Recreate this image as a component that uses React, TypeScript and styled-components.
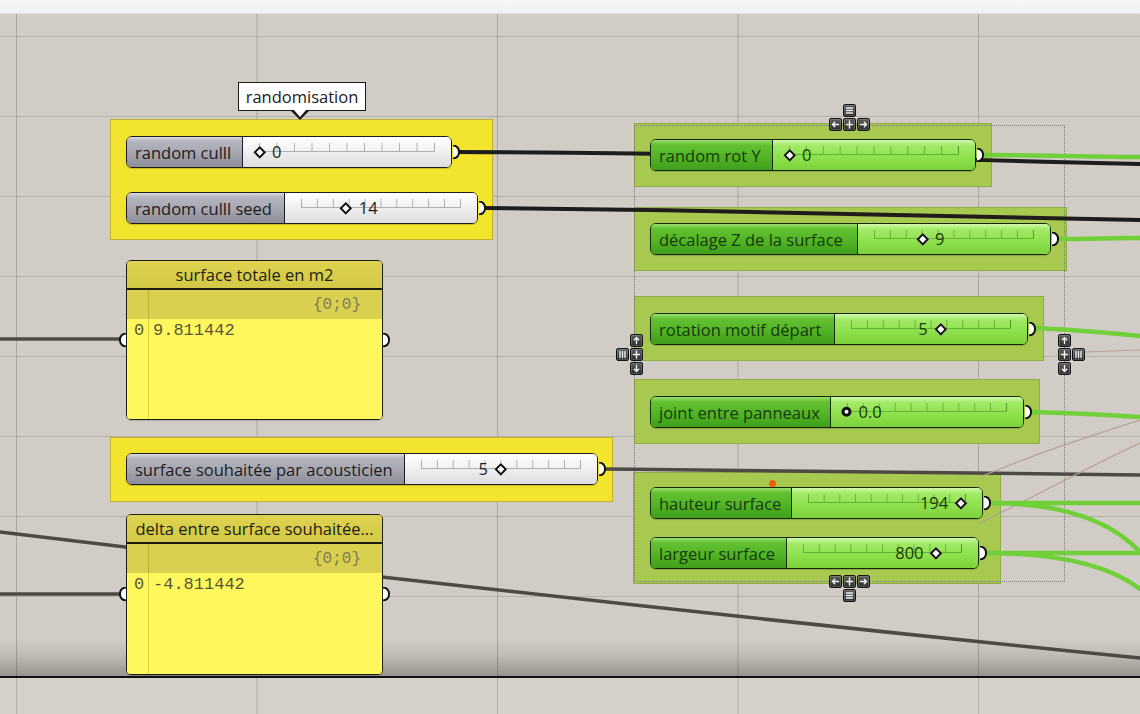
import styled, { createGlobalStyle, css } from "styled-components";

// canvas starts under the 14px light strip at the top of the window
const OY = 14;

type Tone = "gray" | "green";
type KnobKind = "diamond" | "dot";

type SliderSpec = {
  label: string;
  x: number;
  y: number;
  w: number;
  labelW: number;
  value: string;
  pct: number;
  tone: Tone;
  knob?: KnobKind;
};

type GroupSpec = { x: number; y: number; w: number; h: number; tone: "yellow" | "green" };

type PanelSpec = { title: string; x: number; y: number; h: number; value: string };

type Glyph = "menu" | "cols" | "left" | "right" | "up" | "down" | "move";

type PadSpec = { x: number; y: number; dir: "row" | "column"; reverse?: boolean; main: Glyph[]; side: Glyph };

const sliders: SliderSpec[] = [
  { label: "random culll", x: 126, y: 136, w: 326, labelW: 117, value: "0", pct: 0, tone: "gray" },
  { label: "random culll seed", x: 126, y: 192, w: 352, labelW: 159, value: "14", pct: 0.28, tone: "gray" },
  { label: "surface souhaitée par acousticien", x: 126, y: 453, w: 472, labelW: 279, value: "5", pct: 0.5, tone: "gray" },
  { label: "random rot Y", x: 650, y: 139, w: 326, labelW: 123, value: "0", pct: 0, tone: "green" },
  { label: "décalage Z de la surface", x: 650, y: 223, w: 401, labelW: 208, value: "9", pct: 0.3, tone: "green" },
  { label: "rotation motif départ", x: 650, y: 313, w: 378, labelW: 185, value: "5", pct: 0.56, tone: "green" },
  { label: "joint entre panneaux", x: 650, y: 396, w: 374, labelW: 181, value: "0.0", pct: 0, tone: "green", knob: "dot" },
  { label: "hauteur surface", x: 650, y: 487, w: 333, labelW: 142, value: "194", pct: 0.97, tone: "green" },
  { label: "largeur surface", x: 650, y: 537, w: 329, labelW: 137, value: "800", pct: 0.84, tone: "green" },
];

const groups: GroupSpec[] = [
  { x: 110, y: 119, w: 383, h: 121, tone: "yellow" },
  { x: 110, y: 437, w: 503, h: 65, tone: "yellow" },
  { x: 634, y: 123, w: 358, h: 64, tone: "green" },
  { x: 634, y: 207, w: 433, h: 64, tone: "green" },
  { x: 634, y: 296, w: 410, h: 65, tone: "green" },
  { x: 634, y: 379, w: 406, h: 65, tone: "green" },
  { x: 633, y: 472, w: 368, h: 112, tone: "green" },
];

const panels: PanelSpec[] = [
  { title: "surface totale en m2", x: 126, y: 260, h: 160, value: "9.811442" },
  { title: "delta entre surface souhaitée...", x: 126, y: 514, h: 161, value: "-4.811442" },
];

const pads: PadSpec[] = [
  { x: 829, y: 104, dir: "column", main: ["left", "move", "right"], side: "menu" },
  { x: 829, y: 575, dir: "column", reverse: true, main: ["left", "move", "right"], side: "menu" },
  { x: 616, y: 334, dir: "row", main: ["up", "move", "down"], side: "cols" },
  { x: 1058, y: 334, dir: "row", reverse: true, main: ["up", "move", "down"], side: "cols" },
];

const DARK = "#1e1d1b";
const GRAY = "#4d4a46";
const GREEN = "#71d03a";
const FAINT = "#b79f98";

const wires = [
  { d: "M0,339 L122,339", c: GRAY, w: 3.5 },
  { d: "M0,594 L122,594", c: GRAY, w: 3.5 },
  { d: "M0,532 C380,578 760,620 1140,658", c: GRAY, w: 3.5 },
  { d: "M603,469 C800,470 1000,472 1140,475", c: GRAY, w: 3.5 },
  { d: "M980,477 C1040,452 1090,436 1140,420", c: FAINT, w: 1.2 },
  { d: "M980,523 C1040,494 1090,466 1140,443", c: FAINT, w: 1.2 },
  { d: "M1085,352 L1140,350", c: FAINT, w: 1 },
  { d: "M458,152 C700,153 900,158 1140,164", c: DARK, w: 4 },
  { d: "M484,208 C700,210 900,214 1140,220", c: DARK, w: 4 },
  { d: "M982,155 C1050,155 1100,157 1140,157", c: GREEN, w: 4.5 },
  { d: "M1057,239 C1090,239 1110,238 1140,238", c: GREEN, w: 4.5 },
  { d: "M1034,328 C1080,330 1110,333 1140,336", c: GREEN, w: 4.5 },
  { d: "M1030,412 C1080,413 1110,415 1140,417", c: GREEN, w: 4.5 },
  { d: "M989,503 L1140,503", c: GREEN, w: 4.5 },
  { d: "M989,503 C1060,503 1110,520 1140,552", c: GREEN, w: 4.5 },
  { d: "M985,553 L1140,553", c: GREEN, w: 4.5 },
  { d: "M985,553 C1060,553 1110,566 1140,589", c: GREEN, w: 4.5 },
];

const glyphPaths: Record<Glyph, string> = {
  menu: "M3.5 4h6M3.5 6.5h6M3.5 9h6",
  cols: "M4 3.5v6M6.5 3.5v6M9 3.5v6",
  left: "M9.5 6.5H3.5M5.7 4.3L3.5 6.5l2.2 2.2",
  right: "M3.5 6.5h6M7.3 4.3l2.2 2.2-2.2 2.2",
  up: "M6.5 9.5V3.5M4.3 5.7l2.2-2.2 2.2 2.2",
  down: "M6.5 3.5v6M4.3 7.3l2.2 2.2 2.2-2.2",
  move: "M6.5 3v7M3.5 6.5h6",
};

export default function App() {
  return (
    <>
      <GlobalStyle />
      <Page>
        <TopStrip />
        <Canvas>
          {groups.map((g, i) => (
            <GroupBox key={i} $x={g.x} $y={g.y} $w={g.w} $h={g.h} $tone={g.tone} />
          ))}
          <Selection $x={634} $y={125} $w={431} $h={457} />
          <Wires viewBox={`0 ${OY} 1140 662`}>
            {wires.map((w, i) => (
              <path key={i} d={w.d} stroke={w.c} strokeWidth={w.w} fill="none" strokeLinecap="round" />
            ))}
          </Wires>
          {sliders.map((s) => (
            <Slider key={s.label} s={s} />
          ))}
          {panels.map((p) => (
            <PanelBox key={p.title} $x={p.x} $y={p.y} $h={p.h}>
              <PanelHead>{p.title}</PanelHead>
              <PanelPath>{"{0;0}"}</PanelPath>
              <PanelBody>
                <PanelIndex>0</PanelIndex>
                <PanelValue>{p.value}</PanelValue>
              </PanelBody>
              <PanelGrip $side="left" />
              <PanelGrip $side="right" />
            </PanelBox>
          ))}
          <Tip $x={238} $y={82}>randomisation</Tip>
          {pads.map((p, i) => (
            <Pad key={i} $x={p.x} $y={p.y} $dir={p.dir} $reverse={!!p.reverse}>
              <PadSide>
                <GumButton g={p.side} />
              </PadSide>
              <PadMain $dir={p.dir}>
                {p.main.map((g) => (
                  <GumButton key={g} g={g} />
                ))}
              </PadMain>
            </Pad>
          ))}
          <Marker $x={769} $y={480} />
        </Canvas>
        <Rule />
        <LowerCanvas />
      </Page>
    </>
  );
}

function Slider({ s }: { s: SliderSpec }) {
  const textLeft = s.pct >= 0.5;
  return (
    <SliderBox $x={s.x} $y={s.y} $w={s.w} $tone={s.tone}>
      <SliderLabel $w={s.labelW} $tone={s.tone}>
        {s.label}
      </SliderLabel>
      <SliderTrack $tone={s.tone}>
        <Ruler $tone={s.tone} />
        <Knob $textLeft={textLeft} style={{ left: `calc(16px + ${s.pct} * (100% - 32px))` }}>
          {s.knob === "dot" ? <Dot /> : <Diamond />}
          <KnobValue $tone={s.tone}>{s.value}</KnobValue>
        </Knob>
      </SliderTrack>
      <OutGrip />
    </SliderBox>
  );
}

function GumButton({ g }: { g: Glyph }) {
  return (
    <GumKey>
      <svg width="13" height="13" viewBox="0 0 13 13">
        <path d={glyphPaths[g]} stroke="#f2f2f2" strokeWidth="1.4" fill="none" strokeLinecap="round" strokeLinejoin="round" />
      </svg>
    </GumKey>
  );
}

// styled components

const GlobalStyle = createGlobalStyle`
  html, body {
    margin: 0;
    padding: 0;
    background: #d4d0ca;
  }
  body {
    font-family: "Open Sans", "Noto Sans", sans-serif;
  }
`;

const at = css<{ $x: number; $y: number }>`
  position: absolute;
  left: ${(p) => p.$x}px;
  top: ${(p) => p.$y - OY}px;
`;

const Page = styled.div`
  width: 1140px;
  height: 714px;
  display: flex;
  flex-direction: column;
  overflow: hidden;
`;

const TopStrip = styled.div`
  flex: none;
  height: 13px;
  background: linear-gradient(#f6f5f8, #f1f0f2);
  border-bottom: 1px solid #e6e1d8;
`;

const Canvas = styled.div`
  position: relative;
  flex: none;
  height: 662px;
  overflow: hidden;
  background-color: #d1cdc6;
  background-image: linear-gradient(
      to bottom,
      rgba(40, 36, 32, 0) 0%,
      rgba(40, 36, 32, 0.1) 45%,
      rgba(40, 36, 32, 0.34) 100%
    ),
    linear-gradient(90deg, #aaa6a0 1px, transparent 1px),
    linear-gradient(#b4b0aa 1px, transparent 1px);
  background-size: 100% 38px, 240.5px 100%, 100% 80px;
  background-position: 0 100%, 16px 0, 0 22px;
  background-repeat: no-repeat, repeat-x, repeat-y;
`;

const Rule = styled.div`
  flex: none;
  height: 2px;
  background: #111;
`;

const LowerCanvas = styled.div`
  flex: 1;
  background-color: #d4d0ca;
  background-image: linear-gradient(90deg, #b2aea8 1px, transparent 1px);
  background-size: 240.5px 100%;
  background-position: 16px 0;
`;

const GroupBox = styled.div<{ $x: number; $y: number; $w: number; $h: number; $tone: "yellow" | "green" }>`
  ${at};
  width: ${(p) => p.$w}px;
  height: ${(p) => p.$h}px;
  box-sizing: border-box;
  background: ${(p) => (p.$tone === "yellow" ? "#f3e42d" : "#a8c94f")};
  border: 1px solid ${(p) => (p.$tone === "yellow" ? "#c2b22a" : "#90ad42")};
`;

const Selection = styled.div<{ $x: number; $y: number; $w: number; $h: number }>`
  ${at};
  width: ${(p) => p.$w}px;
  height: ${(p) => p.$h}px;
  box-sizing: border-box;
  border: 1px dotted #7f7d78;
`;

const Wires = styled.svg`
  position: absolute;
  left: 0;
  top: 0;
  width: 1140px;
  height: 662px;
`;

const SliderBox = styled.div<{ $x: number; $y: number; $w: number; $tone: Tone }>`
  ${at};
  width: ${(p) => p.$w}px;
  height: 32px;
  box-sizing: border-box;
  display: flex;
  border: 1.5px solid ${(p) => (p.$tone === "green" ? "#15280a" : "#1d1d1f")};
  border-radius: 6px;
  box-shadow: 0 1px 1px rgba(0, 0, 0, 0.18);
`;

const SliderLabel = styled.div<{ $w: number; $tone: Tone }>`
  flex: none;
  width: ${(p) => p.$w - 1}px;
  box-sizing: border-box;
  display: flex;
  align-items: center;
  padding-left: 8px;
  border-right: 1.5px solid ${(p) => (p.$tone === "green" ? "#15280a" : "#1d1d1f")};
  border-radius: 4.5px 0 0 4.5px;
  font-size: 16.5px;
  white-space: nowrap;
  overflow: hidden;
  color: ${(p) => (p.$tone === "green" ? "#143a06" : "#1c1c1e")};
  background: ${(p) =>
    p.$tone === "green"
      ? "linear-gradient(to bottom, #98de6c 0%, #63c131 16%, #52b426 55%, #3f9f1c 100%)"
      : "linear-gradient(to bottom, #dadae0 0%, #b5b5bf 14%, #a5a5af 55%, #8d8d99 100%)"};
`;

const SliderTrack = styled.div<{ $tone: Tone }>`
  position: relative;
  flex: 1;
  border-radius: 0 4.5px 4.5px 0;
  background: ${(p) =>
    p.$tone === "green"
      ? "linear-gradient(to bottom, #d2f8ae 0%, #a3ea68 18%, #90e14e 55%, #7cd33a 100%)"
      : "linear-gradient(to bottom, #ffffff 0%, #f3f3f3 40%, #dddddd 100%)"};
`;

const Ruler = styled.div<{ $tone: Tone }>`
  position: absolute;
  left: 16px;
  right: 16px;
  top: 6px;
  height: 8px;
  ${(p) => {
    const c = p.$tone === "green" ? "rgba(44, 120, 12, 0.45)" : "#b0b0b0";
    return css`
      border-bottom: 1px solid ${c};
      border-right: 1px solid ${c};
      background: linear-gradient(90deg, ${c} 0 1px, transparent 1px) 0 0 / 10% 100% repeat-x;
    `;
  }}
`;

const Knob = styled.div<{ $textLeft: boolean }>`
  position: absolute;
  top: 50%;
  display: flex;
  align-items: center;
  gap: 7px;
  flex-direction: ${(p) => (p.$textLeft ? "row-reverse" : "row")};
  transform: translate(${(p) => (p.$textLeft ? "calc(-100% + 5.5px)" : "-5.5px")}, -50%);
`;

const Diamond = styled.span`
  flex: none;
  width: 4.5px;
  height: 4.5px;
  margin: 0 1.5px;
  background: #fff;
  border: 2px solid #111;
  transform: rotate(45deg);
`;

const Dot = styled.span`
  flex: none;
  width: 4px;
  height: 4px;
  background: #fff;
  border: 3.5px solid #111;
  border-radius: 50%;
`;

const KnobValue = styled.span<{ $tone: Tone }>`
  font-size: 16.5px;
  line-height: 1;
  color: ${(p) => (p.$tone === "green" ? "#143a06" : "#1c1c1e")};
`;

const OutGrip = styled.span`
  position: absolute;
  right: -9px;
  top: 50%;
  width: 5px;
  height: 11px;
  transform: translateY(-50%);
  background: #fff;
  border: 2px solid #111;
  border-left: none;
  border-radius: 0 8px 8px 0;
`;

const PanelBox = styled.div<{ $x: number; $y: number; $h: number }>`
  ${at};
  width: 257px;
  height: ${(p) => p.$h}px;
  box-sizing: border-box;
  display: flex;
  flex-direction: column;
  border: 1.5px solid #1f1e14;
  border-radius: 5px;
  background: #fff85c;
  box-shadow: 0 1px 1px rgba(0, 0, 0, 0.15);
`;

const PanelHead = styled.div`
  flex: none;
  height: 27px;
  display: flex;
  align-items: center;
  justify-content: center;
  border-bottom: 2px solid #1c1b10;
  border-radius: 3.5px 3.5px 0 0;
  background: linear-gradient(#ddd350, #d3c946);
  font-size: 16.5px;
  color: #1c1c14;
  white-space: nowrap;
  overflow: hidden;
`;

const PanelPath = styled.div`
  flex: none;
  height: 29px;
  display: flex;
  align-items: center;
  justify-content: flex-end;
  padding-right: 21px;
  background: linear-gradient(90deg, transparent 21px, rgba(150, 138, 30, 0.45) 21px 22px, transparent 22px), #dad04f;
  font-family: "Liberation Mono", monospace;
  font-size: 16px;
  color: #807b55;
`;

const PanelBody = styled.div`
  flex: 1;
  display: grid;
  grid-template-columns: 23px 1fr;
  align-content: start;
  padding-top: 2px;
  border-radius: 0 0 3.5px 3.5px;
  background: linear-gradient(90deg, transparent 21px, rgba(170, 160, 40, 0.45) 21px 22px, transparent 22px), #fff85c;
  font-family: "Liberation Mono", monospace;
  font-size: 17px;
  line-height: 20px;
  color: #57553e;
`;

const PanelIndex = styled.span`
  padding-left: 7px;
`;

const PanelValue = styled.span`
  padding-left: 3px;
`;

const PanelGrip = styled.span<{ $side: "left" | "right" }>`
  position: absolute;
  top: 79px;
  ${(p) => p.$side}: -8px;
  width: 5px;
  height: 11px;
  transform: translateY(-50%);
  background: #fff;
  border: 2px solid #111;
  border-${(p) => (p.$side === "left" ? "right" : "left")}: none;
  border-radius: ${(p) => (p.$side === "left" ? "8px 0 0 8px" : "0 8px 8px 0")};
`;

const Tip = styled.div<{ $x: number; $y: number }>`
  ${at};
  width: 128px;
  height: 29px;
  box-sizing: border-box;
  display: flex;
  align-items: center;
  justify-content: center;
  border: 1.5px solid #1a1a1a;
  background: #fff;
  font-size: 16.5px;
  color: #1a1a1a;
  &::before,
  &::after {
    content: "";
    position: absolute;
    width: 0;
    height: 0;
  }
  &::before {
    left: 52px;
    bottom: -10px;
    border-left: 9px solid transparent;
    border-right: 9px solid transparent;
    border-top: 9px solid #1a1a1a;
  }
  &::after {
    left: 54.5px;
    bottom: -6.5px;
    border-left: 6.5px solid transparent;
    border-right: 6.5px solid transparent;
    border-top: 7px solid #fff;
  }
`;

const Pad = styled.div<{ $x: number; $y: number; $dir: "row" | "column"; $reverse: boolean }>`
  ${at};
  display: flex;
  align-items: center;
  gap: 1px;
  flex-direction: ${(p) => (p.$reverse ? `${p.$dir}-reverse` : p.$dir)};
`;

const PadSide = styled.div`
  display: flex;
`;

const PadMain = styled.div<{ $dir: "row" | "column" }>`
  display: flex;
  gap: 1px;
  flex-direction: ${(p) => (p.$dir === "column" ? "row" : "column")};
`;

const GumKey = styled.span`
  display: flex;
  width: 13px;
  height: 13px;
  box-sizing: border-box;
  align-items: center;
  justify-content: center;
  border: 1px solid #151515;
  border-radius: 2px;
  background: linear-gradient(#5d5d5d, #2c2c2c);
  box-shadow: inset 0 0 0 1px rgba(255, 255, 255, 0.18);
  svg {
    flex: none;
    margin: -1px;
  }
`;

const Marker = styled.span<{ $x: number; $y: number }>`
  ${at};
  width: 7px;
  height: 7px;
  border-radius: 50%;
  background: #f45a0c;
`;
